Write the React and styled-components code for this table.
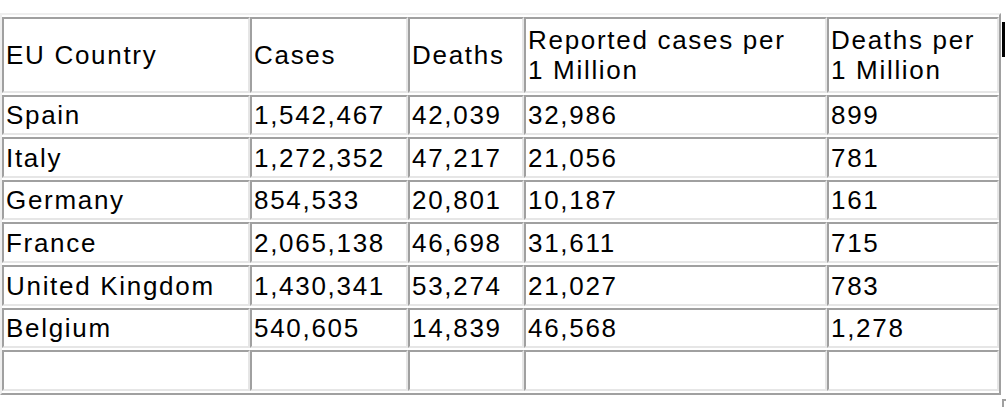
import styled, { createGlobalStyle } from 'styled-components';

// Plain page, old-style bordered data table
const GlobalStyle = createGlobalStyle`
  body {
    margin: 0;
    background: #fff;
    font-family: 'Liberation Sans', Arial, sans-serif;
    color: #000;
  }
  * {
    box-sizing: border-box;
  }
`;

const Page = styled.div`
  display: flex;
  flex-direction: column;
  padding-top: 13px;
  width: 1006px;
  height: 407px;
  overflow: hidden;
`;

const TopRow = styled.div`
  display: flex;
  align-items: flex-start;
  gap: 1px;
`;

const Table = styled.table`
  border-collapse: separate;
  border-spacing: 0 2px;
  border-style: solid;
  border-width: 2px;
  border-color: #efefef #a0a0a0 #a0a0a0 #efefef;
  table-layout: fixed;
  width: 1001px;
  flex-shrink: 0;
`;

const Row = styled.tr`
  height: ${(p) => p.$h}px;
`;

const Cell = styled.td`
  width: ${(p) => (p.$w ? `${p.$w}px` : 'auto')};
  border-style: solid;
  border-width: 2px;
  border-color: #a0a0a0 #e6e6e6 #e6e6e6 #a0a0a0;
  padding: 0 2px;
  vertical-align: middle;
  font-size: 26px;
  line-height: 30px;
  letter-spacing: 1.7px;
  white-space: nowrap;
  text-align: left;
  font-weight: normal;
`;

// stray caret-like bar to the right of the table
const Caret = styled.div`
  width: 3px;
  height: 35px;
  margin-top: 9px;
  background: #000;
`;

// corner of the next element peeking in below
const NextBox = styled.div`
  margin-left: 1002px;
  margin-top: 4px;
  width: 10px;
  height: 12px;
  border-top: 2px solid #a0a0a0;
  border-left: 2px solid #a0a0a0;
`;

const widths = [248, 158, 116, 303, 172];

const rows = [
  { h: 40, cells: ['Spain', '1,542,467', '42,039', '32,986', '899'] },
  { h: 41, cells: ['Italy', '1,272,352', '47,217', '21,056', '781'] },
  { h: 40, cells: ['Germany', '854,533', '20,801', '10,187', '161'] },
  { h: 41, cells: ['France', '2,065,138', '46,698', '31,611', '715'] },
  { h: 41, cells: ['United Kingdom', '1,430,341', '53,274', '21,027', '783'] },
  { h: 40, cells: ['Belgium', '540,605', '14,839', '46,568', '1,278'] },
  { h: 41, cells: ['', '', '', '', ''] },
];

function App() {
  return (
    <>
      <GlobalStyle />
      <Page>
        <TopRow>
          <Table>
            <tbody>
              <Row $h={76}>
                <Cell $w={widths[0]}>EU Country</Cell>
                <Cell $w={widths[1]}>Cases</Cell>
                <Cell $w={widths[2]}>Deaths</Cell>
                <Cell $w={widths[3]}>
                  Reported cases per
                  <br />1 Million
                </Cell>
                <Cell $w={widths[4]}>
                  Deaths per
                  <br />1 Million
                </Cell>
              </Row>
              {rows.map((r, i) => (
                <Row key={i} $h={r.h}>
                  {r.cells.map((v, j) => (
                    <Cell key={j}>{v || '\u00a0'}</Cell>
                  ))}
                </Row>
              ))}
            </tbody>
          </Table>
          <Caret />
        </TopRow>
        <NextBox />
      </Page>
    </>
  );
}

export default App;
